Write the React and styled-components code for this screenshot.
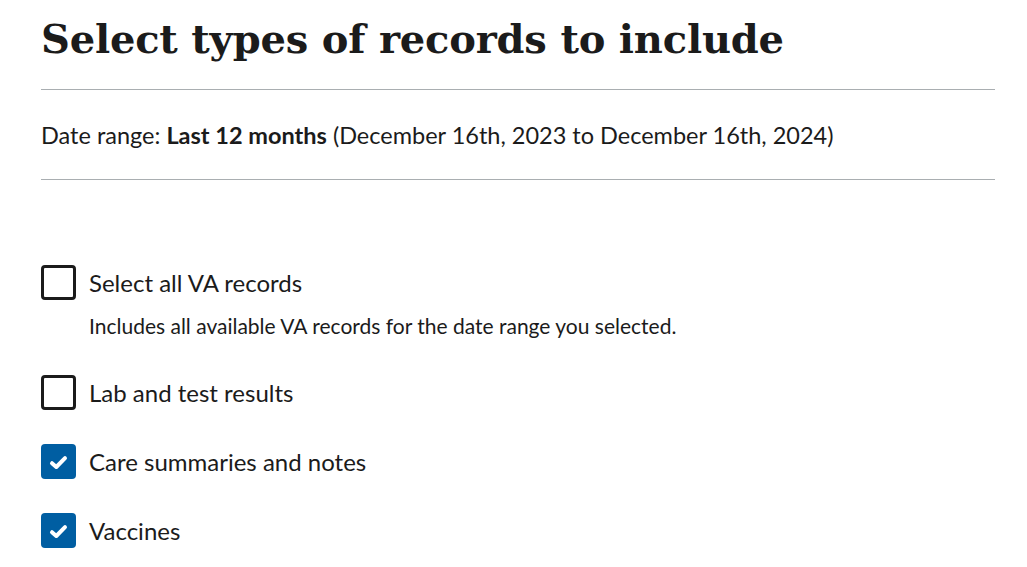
import React from "react";
import styled, { createGlobalStyle } from "styled-components";

const GlobalStyle = createGlobalStyle`
  html, body {
    margin: 0;
    padding: 0;
    background: #ffffff;
  }
  body {
    font-family: Lato, "Open Sans", sans-serif;
    color: #1b1b1b;
  }
`;

const Page = styled.main`
  padding: 0 32px 0 41px;
`;

const Title = styled.h1`
  margin: 0;
  padding-top: 11px;
  font-family: "DejaVu Serif", "Liberation Serif", serif;
  font-weight: 700;
  font-size: 40px;
  line-height: 55px;
  letter-spacing: -0.2px;
  color: #1b1b1b;
`;

const Rule = styled.hr`
  margin: ${(p) => p.$top || 0}px 0 0;
  border: 0;
  border-top: 1px solid #a9aeb1;
  height: 0;
`;

const DateLine = styled.p`
  margin: 29px 0 0;
  font-size: 23.5px;
  line-height: 33px;
  strong {
    font-weight: 700;
  }
`;

const Fieldset = styled.fieldset`
  margin: 85px 0 0;
  padding: 0;
  border: 0;
  display: flex;
  flex-direction: column;
  gap: 34px;
`;

const Item = styled.div`
  display: flex;
  flex-direction: column;
`;

const Row = styled.label`
  display: flex;
  align-items: center;
  gap: 13px;
  font-size: 24px;
  line-height: 35px;
`;

const Box = styled.span`
  box-sizing: border-box;
  flex: none;
  width: 35px;
  height: 35px;
  border-radius: 4px;
  border: ${(p) => (p.$checked ? "0" : "3px solid #1b1b1b")};
  background: ${(p) => (p.$checked ? "#005ea2" : "#ffffff")};
  display: flex;
  align-items: center;
  justify-content: center;
`;

const Hint = styled.div`
  margin: 12px 0 1px 48px;
  font-size: 21px;
  line-height: 28px;
`;

const Check = () => (
  <svg width="35" height="35" viewBox="0 0 35 35" aria-hidden="true">
    <path
      d="M11 19.2 L15.3 23 L24 14.2"
      fill="none"
      stroke="#ffffff"
      strokeWidth="4"
      strokeLinecap="round"
      strokeLinejoin="round"
    />
  </svg>
);

const records = [
  {
    label: "Select all VA records",
    hint: "Includes all available VA records for the date range you selected.",
    checked: false,
  },
  { label: "Lab and test results", checked: false },
  { label: "Care summaries and notes", checked: true },
  { label: "Vaccines", checked: true },
];

export default function App() {
  return (
    <>
      <GlobalStyle />
      <Page>
        <Title>Select types of records to include</Title>
        <Rule $top={23} />
        <DateLine>
          Date range: <strong>Last 12 months</strong> (December 16th, 2023 to
          December 16th, 2024)
        </DateLine>
        <Rule $top={27} />
        <Fieldset>
          {records.map((r) => (
            <Item key={r.label}>
              <Row>
                <Box $checked={r.checked}>{r.checked && <Check />}</Box>
                {r.label}
              </Row>
              {r.hint && <Hint>{r.hint}</Hint>}
            </Item>
          ))}
        </Fieldset>
      </Page>
    </>
  );
}
